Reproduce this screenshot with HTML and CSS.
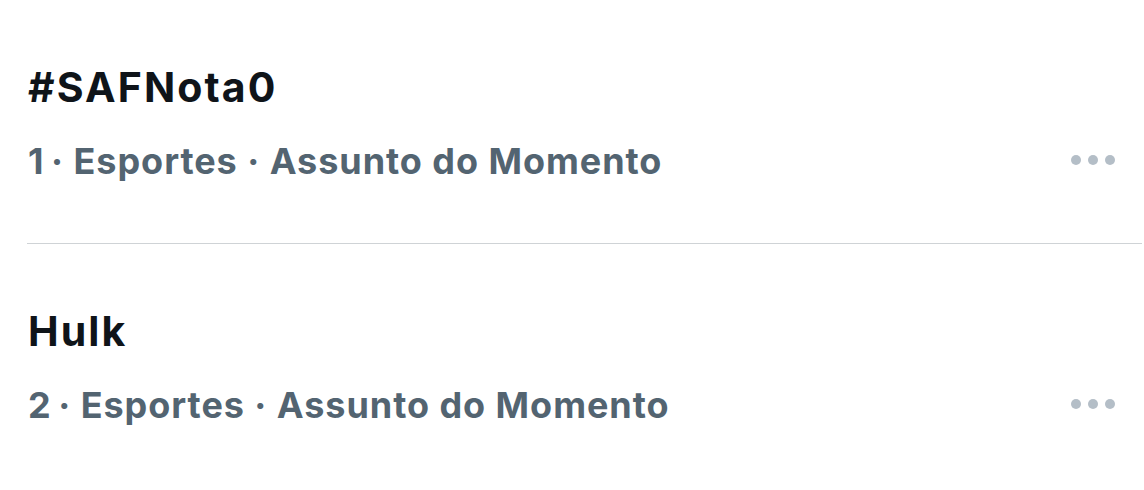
FILE: index.html
```html
<!DOCTYPE html>
<html lang="pt-BR">
<head>
<meta charset="utf-8">
<link rel="stylesheet" href="styles.css">
</head>
<body>
<div class="list">
  <div class="item">
    <div class="text">
      <div class="title">#SAFNota0</div>
      <div class="meta">1&thinsp;· Esportes · Assunto do Momento</div>
    </div>
    <div class="more"><span></span><span></span><span></span></div>
  </div>
  <div class="item">
    <div class="text">
      <div class="title">Hulk</div>
      <div class="meta">2&thinsp;· Esportes · Assunto do Momento</div>
    </div>
    <div class="more"><span></span><span></span><span></span></div>
  </div>
</div>
</body>
</html>
```
FILE: styles.css
```css
html, body {
  margin: 0;
  padding: 0;
  background: #ffffff;
}
body {
  width: 1144px;
  height: 490px;
  overflow: hidden;
  font-family: Inter, "Noto Sans", sans-serif;
}
.list {
  display: flex;
  flex-direction: column;
}
.item {
  margin-left: 27px;
  margin-right: 2px;
  padding: 63px 27px 58px 1px;
  border-bottom: 1px solid #cfd3d6;
  display: flex;
  align-items: flex-end;
  justify-content: space-between;
}
.item:last-child {
  border-bottom: none;
}
.title {
  font-size: 41px;
  line-height: 49px;
  font-weight: 700;
  letter-spacing: 2.1px;
  color: #0f1419;
}
.meta {
  margin-top: 25px;
  font-size: 36px;
  line-height: 48px;
  font-weight: 650;
  letter-spacing: 0.95px;
  color: #536471;
}
.more {
  display: flex;
  gap: 7px;
  padding-bottom: 20px;
}
.more span {
  width: 10px;
  height: 10px;
  border-radius: 50%;
  background: #b4bec7;
}
```
